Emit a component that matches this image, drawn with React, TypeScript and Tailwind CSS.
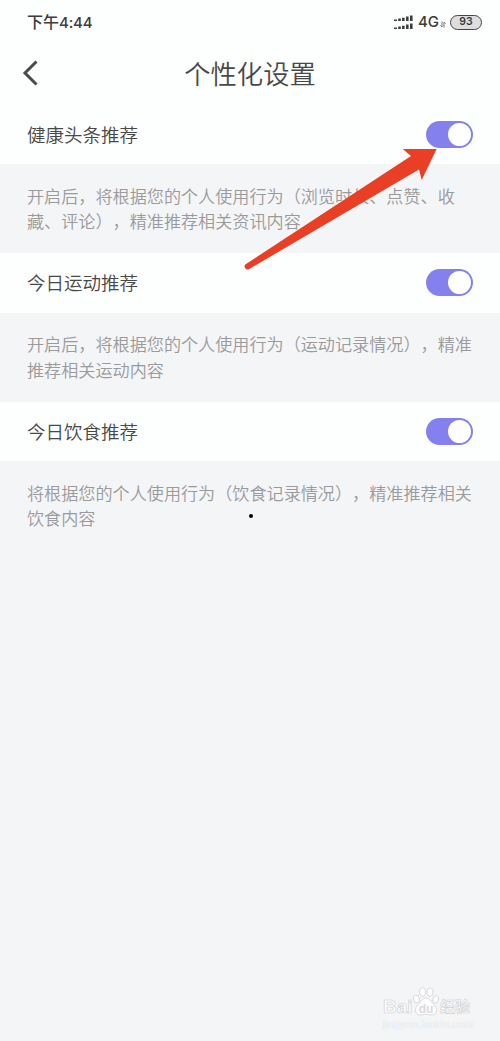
import { useState } from "react";

const sections = [
  {
    title: "健康头条推荐",
    lines: [
      "开启后，将根据您的个人使用行为（浏览时长、点赞、收",
      "藏、评论），精准推荐相关资讯内容",
    ],
  },
  {
    title: "今日运动推荐",
    lines: [
      "开启后，将根据您的个人使用行为（运动记录情况），精准",
      "推荐相关运动内容",
    ],
  },
  {
    title: "今日饮食推荐",
    lines: [
      "将根据您的个人使用行为（饮食记录情况），精准推荐相关",
      "饮食内容",
    ],
  },
];

function StatusBar() {
  return (
    <div className="flex h-11 items-center justify-between pl-[27px] pr-[18px] text-[#3c3c3c]">
      <span className="text-[16px] font-medium">
        下午<span className="font-['Inter',sans-serif] text-[15px] tracking-[-0.2px]">4:44</span>
      </span>
      <div className="flex items-center">
        <svg width="20" height="16" viewBox="0 0 20 16" fill="#3c3c3c">
          <path d="M0 5.5h3v1.5H0zM4.2 4.6h2.6V7H4.2zM8 3.8h2.6V7H8zM12 2.6h2.6V7H12zM16 1.5h2.6V7H16z" />
          <path d="M0 13.5h3V15H0zM4.2 12.6h2.6V15H4.2zM8 11.8h2.6V15H8zM12 10.6h2.6V15H12zM16 9.5h2.6V15H16z" />
        </svg>
        <span className="ml-[4px] w-[21px] font-['Inter',sans-serif] text-[15px] leading-4 font-medium">4G</span>
        <svg className="mt-1 ml-px" width="6" height="7" viewBox="0 0 6 7" fill="none" stroke="#666" strokeWidth="0.9">
          <path d="M2 0.5v5.5L.4 4.4M4 6.5V1l1.6 1.6" />
        </svg>
        <span className="ml-[4px] flex h-[15px] w-[32px] items-center justify-center rounded-full border-[1.5px] border-[#444] bg-[#dedede] font-['Inter',sans-serif] text-[10.5px] leading-none font-semibold">
          93
        </span>
      </div>
    </div>
  );
}

function Toggle({ label }: { label: string }) {
  const [on, setOn] = useState(true);

  return (
    <button
      type="button"
      role="switch"
      aria-checked={on}
      aria-label={label}
      onClick={() => setOn(!on)}
      className={`flex h-[27px] w-[47px] items-center rounded-full px-[2px] ${
        on ? "justify-end bg-[#8481ee]" : "justify-start bg-gray-300"
      }`}
    >
      <span className="size-[23px] rounded-full bg-white" />
    </button>
  );
}

function Watermark() {
  return (
    <div className="absolute top-[985px] left-[383px] w-[92px] font-['Liberation_Sans','Noto_Sans_CJK_SC',sans-serif] text-[#fcfcfd]">
      <div className="flex h-[33px] items-end whitespace-nowrap [-webkit-text-stroke:0.6px_#d0d1d4]">
        <span className="w-[29px] text-[19px] leading-[22px] font-bold">Bai</span>
        <svg
          width="28"
          height="32"
          viewBox="0 0 28 32"
          fill="#fdfdfd"
          stroke="#d0d1d4"
          strokeWidth="0.8"
        >
          <ellipse cx="4.5" cy="13" rx="3" ry="4" transform="rotate(-15 4.5 13)" />
          <ellipse cx="10.5" cy="6" rx="3" ry="4.2" />
          <ellipse cx="18" cy="6.2" rx="3" ry="4.2" transform="rotate(10 18 6.2)" />
          <ellipse cx="23.7" cy="13.4" rx="2.9" ry="3.8" transform="rotate(15 23.7 13.4)" />
          <path d="M14 12c-4 0-4.8 4-7.5 6.2C1.7 22 2.9 29 8 29c2.5 0 4-.7 6-.7s3.5.7 6 .7c5.1 0 6.3-6.5 1.8-10.5-2.6-2.3-4-6.5-7.8-6.5z" />
          <text
            x="14"
            y="26.5"
            textAnchor="middle"
            className="[-webkit-text-stroke:0]"
            fontSize="12"
            fontWeight="bold"
            fill="#d9dadd"
            stroke="none"
          >
            du
          </text>
        </svg>
        <span className="text-[15px] leading-[22px] font-bold">经验</span>
      </div>
      <div className="text-[11px] leading-[13px] tracking-[0.1px] [text-shadow:0_0_1px_#c4c6ca]">jingyan.baidu.com</div>
    </div>
  );
}

export default function App() {
  return (
    <div className="relative h-[1041px] w-[500px] overflow-hidden bg-[#f4f5f7] font-['Noto_Sans_CJK_SC',sans-serif] [text-spacing-trim:space-all]">
      <header className="h-[104.5px] bg-[#fdfefe]">
        <StatusBar />
        <div className="flex h-[58px] items-center">
          <button type="button" aria-label="返回" className="w-[62px] pl-[22px]">
            <svg width="17" height="26" viewBox="0 0 17 26" fill="none" stroke="#4a4a4a" strokeWidth="3">
              <path d="M14.5 1.5 3 13l11.5 11.5" />
            </svg>
          </button>
          <h1 className="flex-1 pr-[62px] text-center text-[26.3px] font-[350] text-[#484848]">个性化设置</h1>
        </div>
      </header>

      {sections.map(({ title, lines }) => (
        <section key={title} className="h-[148.6px]">
          <div className="flex h-[59.5px] items-center justify-between bg-[#fdfefe] px-[27px]">
            <h2 className="pt-px text-[18.5px] font-[350] text-[#484848]">{title}</h2>
            <Toggle label={title} />
          </div>
          <p className="pt-[18.8px] pl-[27px] text-[17.12px] leading-[25.3px] font-[350] whitespace-nowrap text-[#999a9b]">
            {lines[0]}
            <br />
            {lines[1]}
          </p>
        </section>
      ))}

      {/* pointer to the first switch */}
      <svg className="pointer-events-none absolute top-[140px] left-[240px]" width="200" height="135" fill="#e93f25">
        <path d="M196.7 9H162.7L171 16 6 124a2.8 2.8 0 0 0 3.2 5L179 29.5 181.7 40z" />
      </svg>
      <span className="absolute top-[514px] left-[249px] size-1 rounded-full bg-black" />

      <Watermark />
    </div>
  );
}
